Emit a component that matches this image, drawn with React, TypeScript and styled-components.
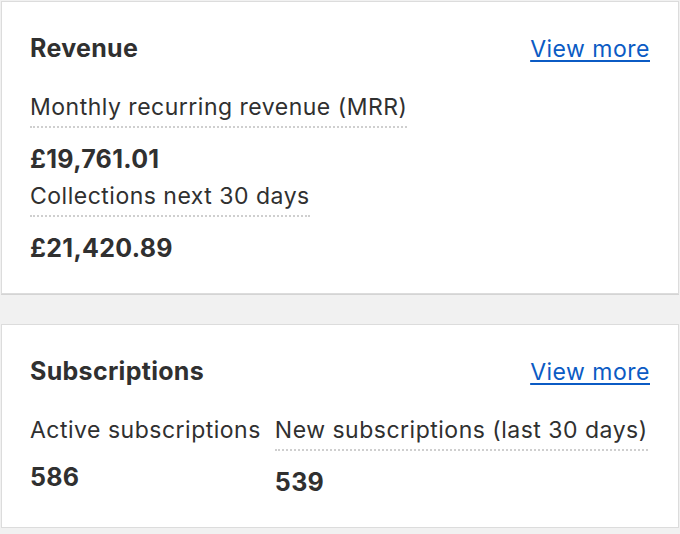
import React from "react";
import styled, { createGlobalStyle } from "styled-components";

const GlobalStyle = createGlobalStyle`
  html, body {
    margin: 0;
    padding: 0;
    background: #f1f1f1;
  }
  body {
    font-family: Inter, "Noto Sans", "Liberation Sans", sans-serif;
    color: #303030;
    -webkit-font-smoothing: antialiased;
  }
`;

const Page = styled.main`
  display: flex;
  flex-direction: column;
  gap: 30px;
  padding: 1px 1px 0;
`;

const Card = styled.section`
  background: #ffffff;
  border: 1px solid #dcdcdc;
  box-shadow: 0 1px 0 #d4d4d4;
  padding: 30px 28px 30px 28px;
`;

const Header = styled.header`
  display: flex;
  justify-content: space-between;
  align-items: baseline;
  margin-bottom: 28px;
`;

const Title = styled.h2`
  margin: 0;
  font-size: 25px;
  line-height: 32px;
  letter-spacing: 0.3px;
  font-weight: 700;
  color: #303030;
`;

const MoreLink = styled.a`
  font-size: 23px;
  line-height: 32px;
  letter-spacing: 0.5px;
  color: #0b5bc4;
  text-decoration: underline;
  text-decoration-thickness: 1.5px;
  text-underline-offset: 3px;
  cursor: pointer;
`;

const Stack = styled.div`
  display: flex;
  flex-direction: column;
  gap: 8px;
`;

const Row = styled.div`
  display: flex;
  gap: 14px;
`;

const Metric = styled.div`
  display: flex;
  flex-direction: column;
  align-items: flex-start;
`;

const Label = styled.span<{ $dotted?: boolean }>`
  display: inline-block;
  font-size: 23px;
  line-height: 28px;
  letter-spacing: 0.5px;
  white-space: nowrap;
  padding-bottom: ${(p) => (p.$dotted ? "5px" : "2px")};
  border-bottom: ${(p) => (p.$dotted ? "2px dotted #cfcfcf" : "none")};
`;

const Value = styled.span`
  margin-top: 16px;
  font-size: 25px;
  line-height: 30px;
  letter-spacing: 0.3px;
  font-weight: 700;
  color: #303030;
`;

export default function App() {
  return (
    <>
      <GlobalStyle />
      <Page>
        <Card>
          <Header>
            <Title>Revenue</Title>
            <MoreLink>View more</MoreLink>
          </Header>
          <Stack>
            <Metric>
              <Label $dotted>Monthly recurring revenue (MRR)</Label>
              <Value>£19,761.01</Value>
            </Metric>
            <Metric>
              <Label $dotted>Collections next 30 days</Label>
              <Value>£21,420.89</Value>
            </Metric>
          </Stack>
        </Card>
        <Card>
          <Header>
            <Title>Subscriptions</Title>
            <MoreLink>View more</MoreLink>
          </Header>
          <Row>
            <Metric>
              <Label>Active subscriptions</Label>
              <Value>586</Value>
            </Metric>
            <Metric>
              <Label $dotted>New subscriptions (last 30 days)</Label>
              <Value>539</Value>
            </Metric>
          </Row>
        </Card>
      </Page>
    </>
  );
}
